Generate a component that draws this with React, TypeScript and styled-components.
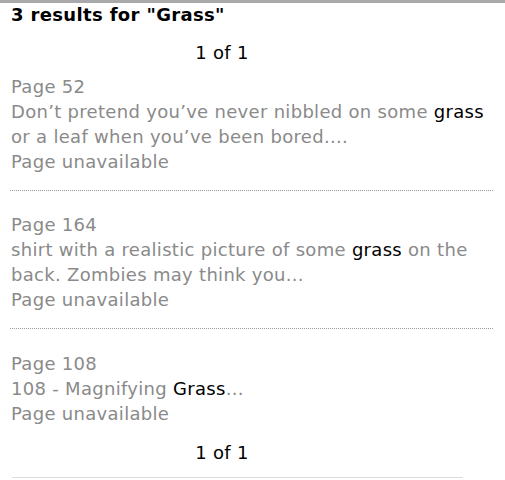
import React from "react";
import styled, { createGlobalStyle } from "styled-components";

const GlobalStyle = createGlobalStyle`
  html, body {
    margin: 0;
    padding: 0;
    background: #ffffff;
  }
  body {
    font-family: "DejaVu Sans", Verdana, sans-serif;
  }
`;

const StyledSearchPanel = styled.div`
  width: 505px;
  height: 480px;
  box-sizing: border-box;
  border-top: 3px solid #a9a9ab;
  overflow: hidden;
  position: relative;
`;

const StyledHeading = styled.h1`
  margin: 0;
  padding: 1px 0 0 11px;
  font-size: 18px;
  font-weight: 700;
  letter-spacing: 0.35px;
  line-height: 22px;
  color: #000;
`;

const StyledPager = styled.div<{ $top: number }>`
  width: 424px;
  margin-left: 10px;
  padding-top: ${(props) => props.$top}px;
  text-align: center;
  font-size: 18px;
  letter-spacing: 0.3px;
  line-height: 25px;
  color: #000;
`;

const StyledResults = styled.ul`
  list-style: none;
  margin: 0;
  padding: 0 12px 0 10px;
`;

const StyledResult = styled.li`
  padding: 21px 0 16px 1px;
  font-size: 18px;
  letter-spacing: 0.3px;
  line-height: 25px;
  color: #8a8a8a;
  border-bottom: 1px dotted #9a9a9a;

  &:first-child {
    padding-top: 9px;
  }

  &:last-child {
    border-bottom: none;
    padding-top: 22px;
    padding-bottom: 0;
  }
`;

const StyledHit = styled.span`
  color: #000;
`;

const StyledFooterLine = styled.div`
  position: absolute;
  left: 12px;
  right: 42px;
  bottom: 2px;
  height: 1px;
  background: #dcdcdc;
`;

type Result = {
  page: string;
  before: string;
  hit: string;
  after: string;
};

const results: Result[] = [
  {
    page: "Page 52",
    before: "Don\u2019t pretend you\u2019ve never nibbled on some ",
    hit: "grass",
    after: " or a leaf when you\u2019ve been bored....",
  },
  {
    page: "Page 164",
    before: "shirt with a realistic picture of some ",
    hit: "grass",
    after: " on the back. Zombies may think you...",
  },
  {
    page: "Page 108",
    before: "108 - Magnifying ",
    hit: "Grass",
    after: "...",
  },
];

const App = () => {
  return (
    <>
      <GlobalStyle />
      <StyledSearchPanel>
        <StyledHeading>3 results for "Grass"</StyledHeading>
        <StyledPager $top={14}>1 of 1</StyledPager>
        <StyledResults>
          {results.map((r) => (
            <StyledResult key={r.page}>
              <div>{r.page}</div>
              <div>
                {r.before}
                <StyledHit>{r.hit}</StyledHit>
                {r.after}
              </div>
              <div>Page unavailable</div>
            </StyledResult>
          ))}
        </StyledResults>
        <StyledPager $top={14}>1 of 1</StyledPager>
        <StyledFooterLine />
      </StyledSearchPanel>
    </>
  );
};

export default App;
